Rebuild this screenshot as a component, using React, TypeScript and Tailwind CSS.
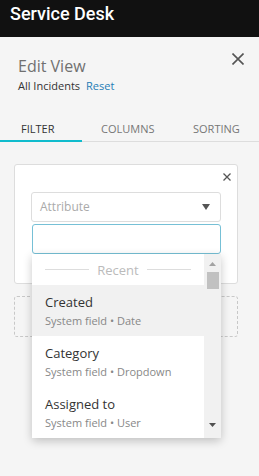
import React from "react";

const XIcon = ({ size, stroke, color }: { size: number; stroke: number; color: string }) => (
  <svg width={size} height={size} viewBox={`0 0 ${size} ${size}`}>
    <path d={`M0.5 0.5 L${size - 0.5} ${size - 0.5} M${size - 0.5} 0.5 L0.5 ${size - 0.5}`} stroke={color} strokeWidth={stroke} fill="none" />
  </svg>
);

const items = [
  { t: "Created", s: "System field • Date", hl: true },
  { t: "Category", s: "System field • Dropdown", hl: false },
  { t: "Assigned to", s: "System field • User", hl: false },
];

export default function App() {
  return (
    <div className="w-[259px] h-[476px] bg-[#f5f5f5] overflow-hidden" style={{ fontFamily: '"Open Sans", sans-serif' }}>
      <div className="h-[37px] bg-[#111111] pl-[10px] pt-[3px]">
        <div className="text-white text-[18px] leading-[21px] font-medium" style={{ fontFamily: 'Roboto, sans-serif' }}>Service Desk</div>
      </div>
      <div className="flex justify-between pl-[18px] pr-[15px]">
        <div className="pt-[19px]">
          <div className="text-[16px] leading-[20px] text-[#707070]">Edit View</div>
          <div className="mt-[2px] text-[11px] leading-[16px] flex gap-[6px]">
            <span className="text-[#333333]">All Incidents</span>
            <span className="text-[#1f7db5]">Reset</span>
          </div>
        </div>
        <div className="pt-[16px]">
          <XIcon size={12} stroke={1.6} color="#555555" />
        </div>
      </div>
      <div className="mt-[27px] flex border-b border-[#dddddd] text-[11px] leading-[16px] uppercase">
        <div className="w-[82px] pl-[21px] pb-[3px] border-b-2 border-[#10bccd] mb-[-1px] text-[#333333]">Filter</div>
        <div className="pl-[19px] pb-[3px] w-[111px] text-[#777777]">Columns</div>
        <div className="pb-[3px] text-[#777777]">Sorting</div>
      </div>
      <div className="ml-[14px] w-[224px] mt-[22px] relative h-[120px] bg-white border border-[#dddddd] rounded-[3px] pt-[27px] px-[16px]">
        <div className="absolute right-[6px] top-[8px]">
          <XIcon size={8} stroke={1.3} color="#555555" />
        </div>
        <div className="relative">
          <div className="h-[30px] border border-[#dddddd] rounded-[3px] flex items-center justify-between pl-[8px] pr-[10px]">
            <span className="text-[12px] text-[#aaaaaa]">Attribute</span>
            <svg width="8" height="6" viewBox="0 0 8 6"><path d="M0 0 L8 0 L4 6 Z" fill="#555555" /></svg>
          </div>
          <div className="absolute left-[1px] top-[32px] w-[189px] z-10">
            <div className="h-[30px] bg-white border border-[#76c0d6] rounded-[3px]" />
            <div className="bg-white shadow-[0_3px_10px_rgba(0,0,0,0.22)] rounded-b-[3px] flex">
              <div className="flex-1">
                <div className="h-[31px] flex items-center gap-[8px] px-[13px]">
                  <div className="flex-1 h-px bg-[#dddddd]" />
                  <span className="text-[13px] text-[#bbbbbb] leading-[16px]">Recent</span>
                  <div className="flex-1 h-px bg-[#dddddd]" />
                </div>
                {items.map((it) => (
                  <div key={it.t} className={`h-[51px] pl-[13px] pt-[8px] ${it.hl ? "bg-[#f1f1f1]" : "bg-white"}`}>
                    <div className="text-[13px] leading-[18px] text-[#333333]">{it.t}</div>
                    <div className="mt-[2px] text-[11px] leading-[16px] text-[#888888]">{it.s}</div>
                  </div>
                ))}
              </div>
              <div className="w-[17px] bg-[#f1f1f1] flex flex-col items-center">
                <svg className="mt-[8px]" width="7" height="4" viewBox="0 0 7 4"><path d="M0 4 L7 4 L3.5 0 Z" fill="#a3a3a3" /></svg>
                <div className="mt-[6px] w-[12px] h-[17px] bg-[#c1c1c1]" />
                <div className="flex-1" />
                <svg className="mb-[11px]" width="7" height="4" viewBox="0 0 7 4"><path d="M0 0 L7 0 L3.5 4 Z" fill="#505050" /></svg>
              </div>
            </div>
          </div>
        </div>
      </div>
      <div className="ml-[14px] w-[224px] mt-[12px] h-[41px] border border-dashed border-[#c8c8c8] rounded-[3px]" />
    </div>
  );
}
